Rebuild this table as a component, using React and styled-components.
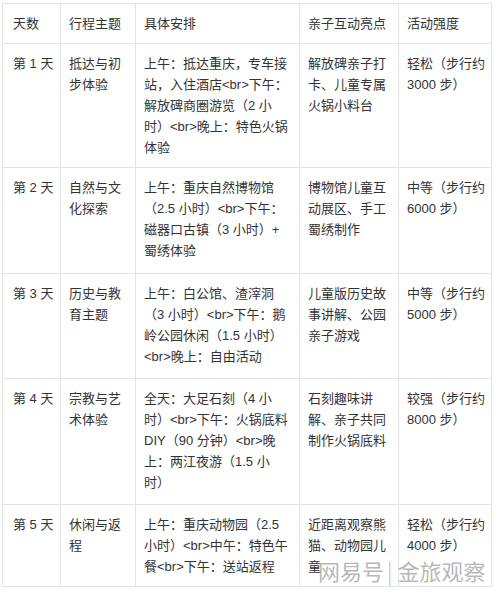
import React from "react";
import styled, { createGlobalStyle } from "styled-components";

const Global = createGlobalStyle`
  html, body { margin: 0; padding: 0; background: #fff; }
  body { font-family: "Liberation Sans", "Noto Sans CJK SC", sans-serif; }
`;

const Page = styled.div`
  position: relative;
  width: 500px;
  height: 592px;
  padding: 3px 0 0 2px;
  box-sizing: border-box;
  background: #fff;
  overflow: hidden;
`;

const Table = styled.table`
  border-collapse: collapse;
  table-layout: fixed;
  width: 490px;
  color: #333;
  font-size: 13px;
  line-height: 21px;
`;

const HeadCell = styled.th`
  border: 1px solid #e3e3e3;
  padding: 9px 8px 9px ${(p) => (p.$first ? 10 : 8)}px;
  text-align: left;
  font-weight: normal;
  vertical-align: top;
`;

const Cell = styled.td`
  border: 1px solid #e3e3e3;
  padding: 9px 8px 9px ${(p) => (p.$first ? 10 : 8)}px;
  vertical-align: top;
  white-space: nowrap;
  height: ${(p) => p.$h}px;
  box-sizing: border-box;
`;

const Watermark = styled.div`
  position: absolute;
  left: 318px;
  top: 557px;
  font-family: "Noto Sans CJK SC", sans-serif;
  font-size: 22px;
  line-height: 26px;
  color: rgba(155, 155, 155, 0.72);
  white-space: nowrap;
  text-shadow: 1px 0 0 rgba(255, 255, 255, 0.6);
`;

const Sep = styled.span`
  display: inline-block;
  margin: 0 5px 0 3px;
  color: rgba(175, 175, 175, 0.8);
  font-weight: 300;
`;

const widths = [58, 75, 164, 99, 93];
const heads = ["天数", "行程主题", "具体安排", "亲子互动亮点", "活动强度"];

const rows = [
  {
    h: 124,
    cells: [
      ["第 1 天"],
      ["抵达与初", "步体验"],
      ["上午：抵达重庆，专车接", "站，入住酒店<br>下午：", "解放碑商圈游览（2 小", "时）<br>晚上：特色火锅", "体验"],
      ["解放碑亲子打", "卡、儿童专属", "火锅小料台"],
      ["轻松（步行约", "3000 步）"],
    ],
  },
  {
    h: 106,
    cells: [
      ["第 2 天"],
      ["自然与文", "化探索"],
      ["上午：重庆自然博物馆", "（2.5 小时）<br>下午：", "磁器口古镇（3 小时）+", "蜀绣体验"],
      ["博物馆儿童互", "动展区、手工", "蜀绣制作"],
      ["中等（步行约", "6000 步）"],
    ],
  },
  {
    h: 105,
    cells: [
      ["第 3 天"],
      ["历史与教", "育主题"],
      ["上午：白公馆、渣滓洞", "（3 小时）<br>下午：鹅", "岭公园休闲（1.5 小时）", "<br>晚上：自由活动"],
      ["儿童版历史故", "事讲解、公园", "亲子游戏"],
      ["中等（步行约", "5000 步）"],
    ],
  },
  {
    h: 126,
    cells: [
      ["第 4 天"],
      ["宗教与艺", "术体验"],
      ["全天：大足石刻（4 小", "时）<br>下午：火锅底料", "DIY（90 分钟）<br>晚", "上：两江夜游（1.5 小", "时）"],
      ["石刻趣味讲", "解、亲子共同", "制作火锅底料"],
      ["较强（步行约", "8000 步）"],
    ],
  },
  {
    h: 82,
    cells: [
      ["第 5 天"],
      ["休闲与返", "程"],
      ["上午：重庆动物园（2.5", "小时）<br>中午：特色午", "餐<br>下午：送站返程"],
      ["近距离观察熊", "猫、动物园儿", "童"],
      ["轻松（步行约", "4000 步）"],
    ],
  },
];

const Lines = ({ lines }) =>
  lines.map((l, i) => (
    <React.Fragment key={i}>
      {i > 0 && <br />}
      {l}
    </React.Fragment>
  ));

export default function App() {
  return (
    <>
      <Global />
      <Page>
        <Table>
          <colgroup>
            {widths.map((w, i) => (
              <col key={i} style={{ width: w }} />
            ))}
          </colgroup>
          <thead>
            <tr>
              {heads.map((h, i) => (
                <HeadCell key={h} $first={i === 0}>
                  {h}
                </HeadCell>
              ))}
            </tr>
          </thead>
          <tbody>
            {rows.map((r, ri) => (
              <tr key={ri}>
                {r.cells.map((c, ci) => (
                  <Cell key={ci} $h={r.h} $first={ci === 0}>
                    <Lines lines={c} />
                  </Cell>
                ))}
              </tr>
            ))}
          </tbody>
        </Table>
        <Watermark>
          网易号<Sep>|</Sep>金旅观察
        </Watermark>
      </Page>
    </>
  );
}
